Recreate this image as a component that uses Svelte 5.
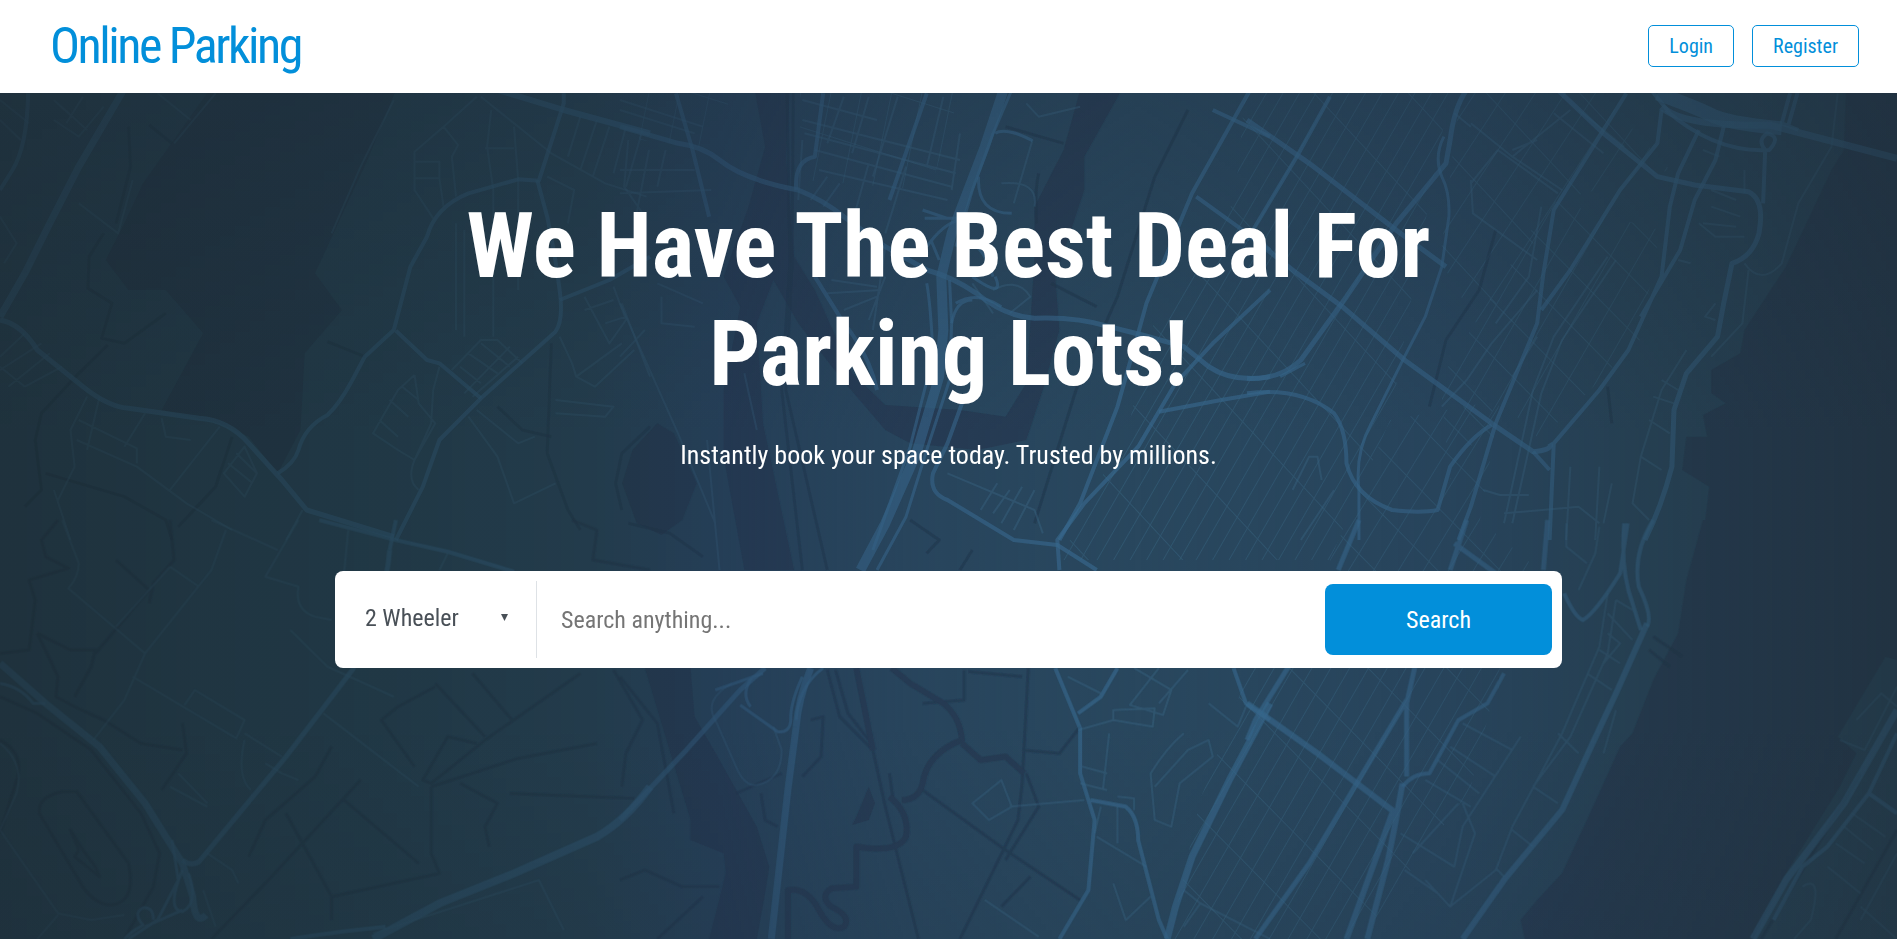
<script>
  let vehicle = $state('2 Wheeler');
  let query = $state('');
  const vehicles = ['2 Wheeler', '4 Wheeler'];

  // Each sheet is one section of the city map, drawn in its own units.
  // Roads are [width, path].
  const sheets = [
    {
      x: 0, y: 90,
      water: ['M505 0H955L890 200L760 550L825 660L735 790L725 1020L670 1150L600 1040L530 1000L390 960L490 730L400 600L310 600L255 510L300 400L345 280Z'],
      creeks: ['M250 430L215 500L212 595L270 640L245 745L300 760L400 670M260 765L190 850L100 970L85 1050L100 1200L60 1250M110 1150L300 1220L400 1290L415 1350M560 1040L520 1190L430 1310M310 110L315 230L280 400M360 105L415 160M1330 760L1320 1090L1370 1260L1400 1320M1568 1010L1500 1090L1485 1180L1500 1260', 'M790 755L880 800M1200 950L1260 1020L1330 1040'],
      roads: [
        [7, 'M298 0L190 230L120 400L60 550L0 680'],
        [4, 'M68 10Q65 170 30 240L0 300'],
        [5, 'M0 690Q50 700 90 780L200 890Q260 950 310 955L480 985Q550 990 600 1060L680 1170L740 1260L950 1340'],
        [4, 'M670 1150Q710 1120 720 1080Q735 1010 790 975Q820 940 850 870L880 800L950 720L990 530L1030 440Q1050 350 1130 310L1250 268L1300 272L1360 40V10'],
        [4, 'M955 1350L1020 1190L1060 1050L1160 925L1340 725Q1360 690 1350 600Q1340 500 1320 380L1296 270'],
        [4, 'M955 722L1030 810L1060 820L1160 925M1350 630L1470 570L1568 500'],
        [6, 'M1200 0L1360 60L1568 130']
      ],
      streets: 'M950 30L870 230L800 430M1150 20L1070 110L1000 185V300L1045 385M1070 110L1105 165L1090 200L1100 320M1185 60L1175 170L1190 300V740M1240 110L1250 270V600M1160 20L1330 190L1460 280L1560 320M1000 215H1060V265H1000M1060 265L1070 350M1170 175H1240M1320 260L1385 300L1370 400M1400 80L1370 200M1440 90L1400 240M1470 110L1430 260M1510 110L1480 250M1550 120L1510 290M1100 400V720M1120 420V740M1000 855L960 900L900 1030L960 1080L1000 1110L1050 1000L1010 940L1000 855M970 890L1010 930M940 930L985 980M915 990L960 1040M1060 830L1045 900L1040 1000L1000 1110Q980 1170 1010 1200M1090 840L1160 750H1200L1260 820M1110 830L1160 880M1130 790L1200 850M1160 760L1230 830M1120 910L1230 770M1140 920L1250 800M1350 740L1380 820L1390 860L1500 760M1390 860L1435 890L1530 780M1410 620L1470 760L1510 690L1480 590M1410 660L1480 630M1460 700L1510 680M1500 640L1568 860M1340 930L1480 950L1460 980L1340 970M1150 960L1250 1060L1290 1040M1130 980L1200 1100L1240 1240L1340 1180M210 920L170 1020L180 1130L140 1230M240 920L210 1080M190 990L330 1075V1120M185 1050L330 1130L450 1240L560 1320M530 1010L410 1200M350 970L300 1070M390 985L400 1040L460 1050M540 1150L590 1070L620 1150L590 1220ZM550 1120L610 1180M570 1090L620 1150M0 800L60 730M0 840L100 760M20 890L120 790M60 890L150 830M0 830L60 890M130 90L190 140L250 50M160 100L200 20M210 120L130 30M0 30L70 100M0 90L50 150M0 380L40 460L10 520M190 340L285 430L320 270M420 160L520 10M380 10L460 90M730 1260L690 1350M130 1200L170 1350'
    },
    {
      x: 620, y: 90,
      water: [
        'M325 0H410L400 200L420 500L470 600L560 850L640 945L820 960L930 980L980 880L990 700L1000 500L1000 350L1070 180L1110 0H1210L1120 200V300L1050 560L1060 720L1020 900L980 1050L860 1080L700 1060L640 1020L530 860L430 700L370 570L330 700L345 1000L420 1440H300L250 1100L250 900L290 650L250 560L310 350L350 170Z',
        'M90 1000L30 1080L5 1180L40 1300L100 1335L150 1290L185 1180L130 1030Z'
      ],
      creeks: ['M403 0L410 520L390 900L440 1440M418 0L415 520L400 900L500 1440M1370 60L1290 260L1200 620L1100 900L1000 1300M1040 580L1150 650M1010 250Q1000 300 1005 400M930 110L1070 160M700 1290L770 1350L740 1390M850 1380L820 1440M20 1300L120 1330L200 1400'],
      roads: [
        [5, 'M0 110L140 160Q200 170 240 210Q300 270 430 300Q490 330 540 380L640 470L740 540Q800 560 860 610Q930 680 1000 685Q1100 680 1180 710L1260 735L1360 770L1420 830Q1480 880 1568 860'],
        [10, 'M925 0L880 170L800 430L775 560L780 720L770 860L715 1090L640 1300L580 1440'],
        [3, 'M945 0L900 130L850 300L810 470M795 570L800 700L795 870L740 1080L690 1280L620 1440M740 580Q750 650 755 800L700 1070L610 1380'],
        [3, 'M905 130Q930 110 995 152M865 260Q860 370 945 370M730 360L790 385M735 385L820 385M740 470Q780 400 820 390M750 450L770 510M810 640Q860 600 920 650M850 560Q930 630 905 560M800 700Q810 630 850 630M900 560Q870 440 820 460'],
        [4, 'M135 10L175 180L215 380M490 10L470 200Q420 210 425 300M740 10L650 330M470 560L540 700Q600 790 620 900'],
        [4, 'M1520 0L1380 310L1270 640L1250 730L1200 950L1110 1240L1060 1350'],
        [4, 'M1568 600L1430 760L1340 880L1250 1070L1120 1240L1055 1350L1060 1440'],
        [4, 'M825 940L790 1060L755 1150Q745 1210 790 1230L950 1350L1055 1365L1150 1440'],
        [4, 'M1300 965L1450 930L1568 905M1430 60L1568 140M1390 320L1568 480']
      ],
      streets: 'M440 30L620 90M440 90L820 210M445 130L810 250M470 180L800 290M480 240L790 330M540 20L500 160M600 20L560 190M670 20L610 260M780 20L740 230M820 130L800 300M500 260L460 330M530 280L490 350M600 220L560 400M690 230L640 430M440 150L430 330M0 30L200 110M0 60L180 130M20 150L10 290L60 380M70 180L40 370M0 310L220 300M0 240H180M110 180L90 290M980 40L1010 80L1110 50M995 150L950 340M920 280Q1010 270 1000 350M510 570L620 590M500 610L630 600M540 660L620 620M600 690L640 560M640 470L610 720M0 640L140 1030L230 1300M90 580L200 640M100 620V700L180 710M210 1050L240 1440M0 800L60 720M300 850L330 1020M940 1200L900 1270M1000 1200L950 1320M790 1150L1000 1260L1020 1330M910 1180L870 1260M970 1190L920 1300M900 600Q960 560 990 620L940 670M850 580L900 670'
    },
    {
      x: 1247, y: 90,
      water: ['M1445 0L1440 180L1410 240L1300 530L1200 720L1190 790L1120 840V910L1155 940L1100 975L1110 1040H1060L1050 1140L1115 1190L1100 1350H1568V0Z'],
      creeks: ['M600 420L560 600L480 750L440 950M870 890L880 1000'],
      roads: [
        [5, 'M0 90L150 220L370 430L480 530M0 430L120 550L230 650L380 810L590 1000L690 1085Q740 1080 730 1060'],
        [4, 'M200 20L120 200L0 450M915 10L860 120L740 360L715 550L700 700L600 1000L540 1250L510 1350'],
        [5, 'M530 0Q500 50 490 150L480 220L360 400L240 620L130 810Q80 870 0 865'],
        [3, 'M475 140Q450 200 470 260Q490 310 487 380L470 530L430 680L380 800L300 1000Q260 1090 270 1200V1350M140 820L80 860'],
        [5, 'M750 0L860 130L990 260L1080 285L1210 305Q1250 330 1235 430Q1220 500 1170 520L1150 640L1135 740L1060 850L1030 960L1025 1130Q1000 1250 960 1350'],
        [4, 'M1000 60L990 160L900 300L780 540L710 660M1090 120L1040 250L1020 350L1000 560L920 780L850 900L740 1060L730 1350M1150 110L1130 210L1080 330L1045 480L950 680'],
        [4, 'M0 910Q130 890 210 970Q240 1020 240 1120Q260 1220 350 1260Q420 1270 460 1260L490 1130Q540 1040 590 1005M730 1140L690 1085'],
        [14, 'M990 10Q1080 50 1120 75T1290 115'],
        [7, 'M1000 50Q1050 110 1260 105L1568 205'],
        [4, 'M1010 60Q1130 190 1260 180Q1290 140 1255 130Q1230 150 1250 180L1245 340M1310 10L1290 100L1330 120M1330 0L1305 110M975 0L1020 70']
      ],
      streets: 'M1425 10L1410 170L1330 340L1290 520Q1240 590 1200 520M1210 540L1195 700L1120 800M540 270L545 370L700 510M605 180L540 280M605 180L750 310M540 100L640 200L780 60M500 70L540 110M700 600L590 760L530 870L470 950M710 350L680 560L600 700M700 740L640 860M870 500L740 740L690 900L620 1300M890 510L760 750L710 910L640 1300M1060 780L1000 900L950 1100L930 1240L970 1290M1000 870L1040 900M980 920L1030 940M970 990L1020 1030M950 1100L1000 1140M1090 400L1130 440L1200 440M1100 400L1180 410M1120 350L1190 380M1120 300L1180 330M1070 520L1040 510M1200 240V310M1100 180L1140 200M1130 640L1105 680L1130 690M640 200L760 300M740 70L860 190M800 60L910 170M640 180L700 150M780 1130L770 1350M850 1130L840 1350M880 1180L860 1300M570 1200L610 1215H680M620 1270L800 1250L850 1300M110 1200L150 1100H170L180 1170M210 1200L130 1350'
    },
    {
      x: 0, y: 520,
      water: [],
      creeks: ['M140 0L100 60L110 110L165 145L70 180L85 240L70 390L0 400M90 340L140 470L135 530L180 560L250 600L340 670L440 690M90 340L170 390H230L220 440L180 530M410 0L420 120L370 190L360 250M280 120L360 210L230 400M0 530L90 580L220 690L340 880L385 1000L370 1100L300 1257M440 610L450 700L390 810', 'M95 880Q90 830 150 815H185L310 1030Q330 1150 265 1155Q220 1150 190 1080Z', 'M170 930L190 990L180 1010L240 1070L230 1040L200 990ZM0 660Q60 700 40 780L0 940', 'M1050 500L960 560L920 600L1000 740M1400 460L1170 660L1040 790L1020 780L1080 650L1150 670M1050 490L1170 650M1140 460L1235 600M1040 800L1250 715L1440 670M1110 790L1200 850L1170 920L1180 980M1230 820L1530 835M830 840L1010 1030M870 780L640 1090L510 1257M800 680L760 770L640 900L600 1010M1040 800L1040 1000L1060 1060L800 1130L690 880M800 1130V1200M1480 450L1550 600L1510 700L1500 800M1380 0L1440 30L1430 120L1568 150'],
      roads: [
        [7, 'M0 430L110 550L240 680L350 850L440 1030L465 1130Q470 1220 497 1185'],
        [4, 'M955 0L940 90'],
        [5, 'M940 90Q930 250 850 450L690 710L480 1025Q460 1040 440 1020'],
        [4, 'M770 0L955 60L1080 95L1240 155'],
        [8, 'M900 1257L1060 1150L1240 1060L1440 950Q1510 900 1568 800'],
        [4, 'M700 1257Q780 1240 930 1220'],
        [3, 'M415 960L430 1080L380 1200L310 1257M440 1050Q400 1170 440 1175Q480 1150 455 1060M440 1170L350 1220M370 1200Q370 1160 345 1163Q320 1180 345 1215Q310 1240 300 1257M0 490Q50 500 80 550H110']
      ],
      streets: 'M150 0L190 130Q190 170 165 205L350 400M510 0L670 90M720 0L640 170L720 200Q710 270 760 290L800 300M545 30L510 150L350 400L300 540L225 660M410 140L480 200M410 140L280 320M320 470L570 655L590 600L470 510L445 555M590 640L680 710M590 660Q570 770 605 810M640 730L680 760L720 780M0 670Q60 730 40 820L0 930L140 1180L220 1200L300 1185M140 1185L90 1257M500 1000L560 1050L575 1090M490 1110L520 1220M840 30L830 160M1080 100L1060 150M700 330L790 440L950 530M780 580L1010 800M900 1240L1300 1080L1360 1230M430 760L500 850M410 800L500 860'
    },
    {
      x: 620, y: 640,
      water: [
        'M60 84L200 0H330L170 84L180 230L240 360L330 560L360 680L350 760L330 897H215L255 700L250 640L170 600V540L60 84Z',
        'M600 440L570 530L560 555L600 540L615 490Z'
      ],
      creeks: ['M500 90L530 230L610 330L640 500L720 897M520 90L550 220L600 300M985 84L970 430L960 540L820 897M980 400L1010 500L930 660M730 450L930 630L1110 780M830 90V180L730 190M970 330L1060 340L1110 260M460 240L490 230L485 350L440 410M0 110L90 250L130 520M840 95L970 110M990 710L920 800M650 400L660 490M0 720L60 690L150 740L240 740M200 770L90 897M280 460L390 400M340 460L350 540L380 560'],
      channels: 'M655 84L700 130L780 190Q820 230 825 300Q740 340 730 430Q720 480 680 480M825 310L870 360L930 350L975 400M650 470Q700 520 690 590Q670 640 570 620V740L510 745Q480 770 510 800Q560 830 540 860Q510 880 480 810Q450 740 405 750V897M570 84L610 330',
      roads: [
        [5, 'M350 84L290 150L160 330L0 540'],
        [7, 'M460 84Q430 180 425 260L405 450L365 897'],
        [3, 'M490 84Q430 140 425 240M320 110Q290 160 315 200M440 110Q410 190 412 240Q410 280 380 275L290 195M345 100L230 150'],
        [4, 'M1050 84L1110 265V400L1145 540L1130 750L1060 897M1200 84L1160 170L1105 220M1135 480L1220 500Q1250 530 1250 600L1300 840L1320 897M1480 84L1510 190L1568 240'],
        [7, 'M1568 190L1470 420L1380 650L1340 800L1320 897']
      ],
      streets: 'M270 130Q200 180 230 240L280 380Q300 440 330 435Q390 420 390 330L370 260M1105 270L1190 240L1285 260L1290 205L1190 210V240M1180 280L1165 450M1115 380L1175 400M1110 430L1175 450M880 780L1010 890M1150 590L1270 680M1160 500L1145 580M1200 500V610M1240 84L1330 150L1310 225L1230 195L1300 84M1370 90L1300 190M1420 190L1490 260L1510 200M850 490L920 420L945 500L890 540ZM940 500L1120 480M1360 280Q1320 320 1280 400L1290 540L1330 560L1350 430L1430 350L1420 300L1370 330L1290 440M1190 730L1220 840L1280 770M1200 470L1240 475V510M1080 110L1160 160M1360 750L1400 790L1568 897M1360 860L1400 790'
    },
    {
      x: 1247, y: 520,
      water: ['M1100 0L1060 180L1040 340L980 480L930 640L900 680L820 900L760 1060L700 1140L660 1200L670 1257H1220L1300 1060L1430 800L1470 700L1425 650L1540 410L1568 420V0Z'],
      creeks: ['M1568 930L1420 1257M1480 760L1240 1257', 'M980 350L1050 410M970 390L1020 440'],
      roads: [
        [5, 'M270 0L220 150M530 0L490 150M725 0L715 150M500 70L600 160M100 440L20 600L0 660M405 440L385 550V770M385 540L260 800L150 1030L20 1257'],
        [6, 'M0 550L170 700L360 880M375 790Q360 900 340 1020L290 1257M350 880L240 1257'],
        [4, 'M620 460L580 550L510 600L440 760Q400 760 375 800M765 220Q790 290 810 300Q840 280 900 160L918 10M910 10Q900 150 930 250L950 330M980 0Q930 100 945 200Q980 290 965 320'],
        [6, 'M965 310L890 520L830 680L760 870L620 1080L520 1257'],
        [7, 'M1568 570L1440 850L1300 1080L1220 1257'],
        [4, 'M1568 640L1500 820L1400 980L1340 1040L1270 1200M1500 820L1568 880']
      ],
      streets: 'M870 220L850 380L760 640L640 920L600 1050L490 1160L430 1080M890 240L870 400L780 650L690 800M750 640L800 700M690 800L750 850M640 930L690 980M600 1045L620 1070M890 240L930 270M870 280L930 360M850 390L900 430M820 460L880 510M870 340L900 370L860 430M490 680L600 770M460 720L560 820M520 610L640 690M660 650L520 920L500 1040L370 940M520 850L550 940L490 1160M430 780L540 860M510 850L400 1000M890 570L860 700M380 1050L460 1120M1480 1160L1568 1257M1400 1040L1480 1120M1460 880L1540 950M1440 920L1510 990M1420 970L1490 1030M1568 1000L1480 1200M1340 1100Q1390 1060 1360 1200L1320 1257M1470 600L1530 520L1568 560M1430 660L1490 690L1568 500M770 10V80L820 130M850 20L840 100L800 210'
    }
  ];

  // Dense street blocks: unit vectors of the two street directions, block size and outline.
  const blocks = [
    { id: 'harlem', m: '0.5 -0.87 0.68 0.73 0 0', w: 72, h: 15, area: 'M1245 93L1235 200L1150 330L1130 420L1060 560H1330L1390 420L1420 250L1450 93Z' },
    { id: 'uptown', m: '0.52 -0.85 0.7 0.71 0 0', w: 46, h: 22, area: 'M1330 560L1390 420L1500 400L1480 520L1540 571H1330Z' },
    { id: 'midtown', m: '0.5 -0.87 0.7 0.71 0 0', w: 58, h: 17, area: 'M1250 668H1500L1470 790L1360 939H1170L1200 800Z' },
    { id: 'east', m: '0.5 -0.87 0.7 0.71 0 0', w: 40, h: 26, area: 'M1550 200L1660 230L1640 340L1540 440L1500 400L1450 480L1440 380Z' },
    { id: 'north', m: '0.55 -0.84 0.68 0.73 0 0', w: 70, h: 26, area: 'M1460 93H1600L1670 170L1560 200L1480 330L1440 260Z' },
    { id: 'west', m: '0.2 -0.98 0.95 0.3 0 0', w: 60, h: 30, area: 'M620 93H730L720 150L640 140ZM800 93H960L930 190L800 180Z' }
  ];
</script>

<svelte:head><title>Online Parking</title></svelte:head>

<div class="page">
  <header>
    <a class="brand" href="#home">Online Parking</a>
    <nav aria-label="Account">
      <a class="outline" href="#login">Login</a>
      <a class="outline" href="#register">Register</a>
    </nav>
  </header>

  <main>
    <svg class="map" viewBox="0 93 1897 846" preserveAspectRatio="xMidYMid slice" aria-hidden="true">
      <defs>
        <linearGradient id="shade" x1="0" x2="1" y1="0" y2="0">
          <stop offset="0" stop-color="#1a272c" stop-opacity=".66" />
          <stop offset=".2" stop-color="#1a2c32" stop-opacity=".56" />
          <stop offset=".31" stop-color="#1d3039" stop-opacity=".5" />
          <stop offset=".38" stop-color="#20344e" stop-opacity=".44" />
          <stop offset=".48" stop-color="#243a56" stop-opacity=".16" />
          <stop offset=".6" stop-color="#284660" stop-opacity="0" />
          <stop offset=".75" stop-color="#243a54" stop-opacity=".2" />
          <stop offset=".86" stop-color="#20323c" stop-opacity=".36" />
          <stop offset="1" stop-color="#1e2d36" stop-opacity=".58" />
        </linearGradient>
        <linearGradient id="topshade" x1="0" x2="0" y1="0" y2="1">
          <stop offset="0" stop-color="#1f2f3e" stop-opacity=".28" />
          <stop offset=".4" stop-color="#1f2f3e" stop-opacity="0" />
          <stop offset=".75" stop-color="#1f2f3e" stop-opacity="0" />
          <stop offset="1" stop-color="#1f2f3e" stop-opacity=".12" />
        </linearGradient>
        <filter id="soften" x="0" y="0" width="1" height="1">
          <feGaussianBlur stdDeviation=".7" />
        </filter>
        {#each blocks as b (b.id)}
          <pattern id={b.id} width={b.w} height={b.h} patternUnits="userSpaceOnUse" patternTransform="matrix({b.m})">
            <path class="grid" d="M0 0H{b.w}M0 0V{b.h}" />
          </pattern>
        {/each}
      </defs>
      <rect class="land" y="93" width="1897" height="846" />
      <g filter="url(#soften)">
        {#each sheets as s}
          <g transform="translate({s.x} {s.y}) scale(.41454 .33333)">
            {#each s.water as d}<path class="water" {d} />{/each}
          </g>
        {/each}
        {#each blocks as b (b.id)}
          <path d={b.area} fill="url(#{b.id})" />
        {/each}
        {#each sheets as s}
          <g class="lines" transform="translate({s.x} {s.y}) scale(.41454 .33333)">
            {#each s.creeks as d}<path class="creek" {d} />{/each}
            {#if s.channels}<path class="channel" d={s.channels} />{/if}
            <path class="street" d={s.streets} />
            {#each s.roads as [w, d]}<path class="road" stroke-width={w} {d} />{/each}
          </g>
        {/each}
      </g>
      <rect y="93" width="1897" height="846" fill="url(#shade)" />
      <rect y="93" width="1897" height="846" fill="url(#topshade)" />
    </svg>

    <div class="hero">
      <h1>We Have The Best Deal For Parking Lots!</h1>
      <p>Instantly book your space today. Trusted by millions.</p>
      <form onsubmit={(e) => e.preventDefault()}>
        <div class="choice">
          <select aria-label="Vehicle type" bind:value={vehicle}>
            {#each vehicles as v}<option>{v}</option>{/each}
          </select>
          <svg class="caret" viewBox="0 0 8 8" aria-hidden="true"><path d="M0 0H8L4 8Z" /></svg>
        </div>
        <input type="text" aria-label="Search" placeholder="Search anything..." bind:value={query} />
        <button type="submit">Search</button>
      </form>
    </div>
  </main>
</div>

<style>
  :global(body) { margin: 0; }
  .page {
    display: flex;
    flex-direction: column;
    min-height: 100vh;
    font-family: "Roboto Condensed", Roboto, "Liberation Sans Narrow", sans-serif;
  }
  header {
    display: flex;
    align-items: center;
    justify-content: space-between;
    box-sizing: border-box;
    min-height: 93px;
    padding: 0 38px 2px 50px;
    background: #fff;
  }
  a { color: #028fda; text-decoration: none; }
  .brand { font-size: 50px; line-height: 60px; letter-spacing: -0.05em; }
  nav { display: flex; gap: 18px; }
  .outline {
    padding: 0 20px;
    border: 1px solid #028fda;
    border-radius: 5px;
    font-size: 20px;
    line-height: 40px;
  }
  main {
    position: relative;
    display: flex;
    flex: 1;
    justify-content: center;
    overflow: hidden;
    background: #223649;
  }
  .map { position: absolute; inset: 0; width: 100%; height: 100%; }
  .land { fill: #29475e; }
  .water { fill: #263b52; }
  .lines { fill: none; stroke-linejoin: round; }
  .lines path { vector-effect: non-scaling-stroke; }
  .road { stroke: #386b90; stroke-opacity: .64; }
  .street { stroke: #3c6a88; stroke-opacity: .42; stroke-width: 2px; }
  .grid { fill: none; stroke: #3c6a88; stroke-opacity: .42; stroke-width: 2px; }
  .creek { stroke: #22364c; stroke-opacity: .6; stroke-width: 3px; }
  .channel { stroke: #263b52; stroke-width: 6px; }
  .hero {
    position: relative;
    box-sizing: border-box;
    width: 100%;
    max-width: 1227px;
    padding: 100px 0 48px;
    color: #fff;
    text-align: center;
  }
  h1 {
    max-width: 1020px;
    margin: 0 auto;
    font-size: 90px;
    font-weight: 700;
    line-height: 108px;
  }
  p { margin: 26px 0 0; font-size: 26px; line-height: 40px; }
  form {
    display: flex;
    align-items: center;
    box-sizing: border-box;
    min-height: 97px;
    margin-top: 96px;
    padding: 10px;
    border-radius: 8px;
    background: #fff;
  }
  .choice {
    display: grid;
    align-items: center;
    width: 191px;
    height: 77px;
    border-right: 1px solid #dee2e6;
  }
  select, .caret { grid-area: 1 / 1; }
  select {
    appearance: none;
    width: 100%;
    height: 100%;
    padding: 0 20px 4px;
    border: 0;
    background: none;
    color: #495057;
    font: inherit;
    font-size: 24px;
  }
  .caret {
    justify-self: end;
    width: 7px;
    height: 7px;
    margin: 0 28px 4px 0;
    fill: #495057;
    pointer-events: none;
  }
  input {
    flex: 1;
    min-width: 0;
    height: 71px;
    padding: 0 24px;
    border: 0;
    outline: 0;
    background: none;
    font: inherit;
    font-size: 24px;
  }
  input::placeholder { color: #757575; opacity: 1; }
  button {
    width: 227px;
    height: 71px;
    border: 0;
    border-radius: 8px;
    background: #028fda;
    color: #fff;
    font: inherit;
    font-size: 24px;
  }
</style>
